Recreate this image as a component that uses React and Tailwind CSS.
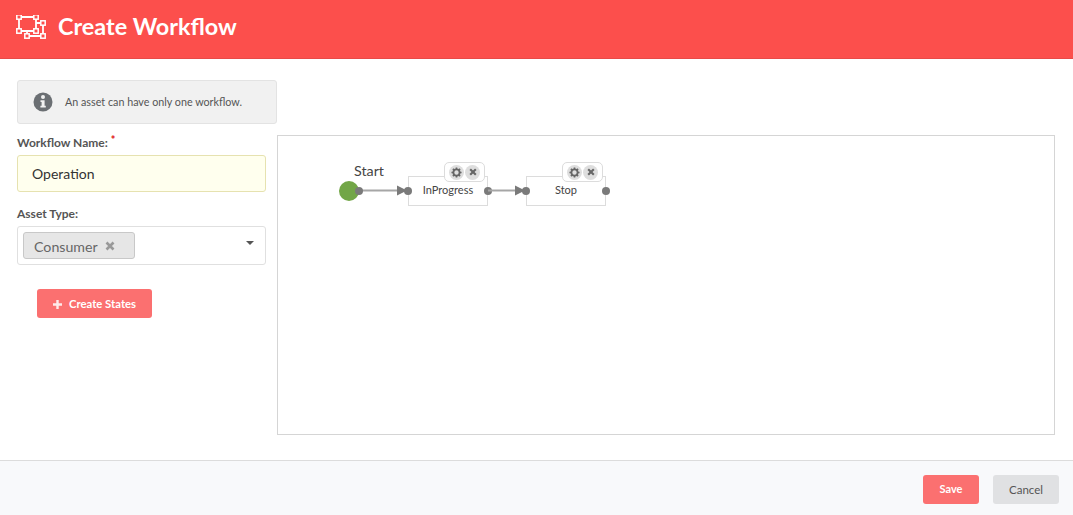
import React from "react";

const lato = { fontFamily: '"Lato", sans-serif' };

function HeaderIcon() {
  const handle = (x, y) => <rect key={x + "-" + y} x={x - 2.2} y={y - 2.2} width="4.4" height="4.4" fill="#fc4f4c" stroke="#fff" strokeWidth="1.5" />;
  return (
    <svg width="32" height="28" viewBox="0 0 32 28" fill="none" className="shrink-0">
      <path d="M3 2H20V16H3Z" stroke="#fff" strokeWidth="1.8" />
      <path d="M20 8H27V21H11V16" stroke="#fff" strokeWidth="1.8" />
      {[[3, 2], [20, 2], [3, 16], [20, 16], [27, 8], [11, 21], [27, 21]].map(([x, y]) => handle(x, y))}
    </svg>
  );
}

function InfoIcon() {
  return (
    <svg width="20" height="20" viewBox="0 0 20 20">
      <circle cx="10" cy="10" r="9.5" fill="#6b6f73" />
      <circle cx="10" cy="5" r="2" fill="#f1f1f1" />
      <path d="M7.5 8.2H11.6V13.8H12.8V15.6H7.4V13.8H8.6V10H7.5Z" fill="#f1f1f1" />
    </svg>
  );
}

function Gear() {
  return (
    <svg width="11" height="11" viewBox="0 0 12 12">
      <circle cx="6" cy="6" r="3.4" fill="none" stroke="#666" strokeWidth="2" />
      <path d="M6 .5V3M6 9V11.5M.5 6H3M9 6H11.5M2.1 2.1L3.8 3.8M8.2 8.2L9.9 9.9M9.9 2.1L8.2 3.8M3.8 8.2L2.1 9.9" stroke="#666" strokeWidth="1.8" />
    </svg>
  );
}

function Cross({ size = 8, color = "#666" }) {
  return (
    <svg width={size} height={size} viewBox="0 0 8 8">
      <path d="M1.2 1.2L6.8 6.8M6.8 1.2L1.2 6.8" stroke={color} strokeWidth="2.1" />
    </svg>
  );
}

function Port({ className }) {
  return <div className={"absolute w-2 h-2 rounded-full bg-[#7a7a7a] " + className} />;
}

function Arrow({ className, width }) {
  return (
    <svg className={"absolute " + className} width={width} height="12" viewBox={`0 0 ${width} 12`}>
      <path d={`M0 5.5H${width - 10}`} stroke="#a6a6a6" strokeWidth="2" />
      <path d={`M${width - 10} .5L${width} 5.5L${width - 10} 10.5Z`} fill="#7a7a7a" />
    </svg>
  );
}

function StateNode({ name, className }) {
  return (
    <div className={"absolute w-20 h-[30px] border border-[#dcdcdc] bg-white flex items-center justify-center pb-[2px] text-[11px] text-[#444] " + className}>
      {name}
      <div className="absolute -top-[15px] right-[2px] h-[20px] w-[41px] bg-white border border-[#dcdcdc] rounded-[5px] flex items-center justify-center gap-[1px]">
        <span className="w-[15px] h-[15px] rounded-full bg-[#dedede] flex items-center justify-center"><Gear /></span>
        <span className="w-[15px] h-[15px] rounded-full bg-[#dedede] flex items-center justify-center"><Cross /></span>
      </div>
      <Port className="-left-[5px] top-[10px]" />
      <Port className="-right-[5px] top-[10px]" />
    </div>
  );
}

export default function App() {
  return (
    <div className="w-[1073px] h-[515px] bg-white flex flex-col overflow-hidden" style={lato}>
      <header className="h-[59px] shrink-0 bg-[#fc4f4c] border-b border-[#e84a47] flex items-center pl-[16px] gap-[10px]">
        <HeaderIcon />
        <h1 className="text-[23.4px] font-bold text-white leading-none mb-[5px]">Create Workflow</h1>
      </header>

      <main className="flex-1 flex items-start pl-[17px]">
        <div className="w-[260px] shrink-0 pt-[21px]">
          <div className="h-[44px] bg-[#f1f1f1] border border-[#e3e3e3] rounded-[3px] flex items-center pl-[15px] gap-[12px]">
            <InfoIcon />
            <span className="text-[10.75px] text-[#555]">An asset can have only one workflow.</span>
          </div>
          <div className="w-[249px]">
            <label className="block mt-[11px] h-[20px] text-[12px] font-bold text-[#555] leading-[16px]">
              Workflow Name: <sup className="text-[#e02020] text-[11px] font-black leading-none -top-[3px]">*</sup>
            </label>
            <div className="h-[37px] bg-[#ffffee] border border-[#e6e2b0] rounded-[3px] flex items-center pl-[14px] text-[14px] text-[#333]">
              Operation
            </div>
            <label className="block mt-[14px] h-[20px] text-[12px] font-bold text-[#555] leading-[16px]">Asset Type:</label>
            <div className="h-[39px] bg-white border border-[#e0e0e0] rounded-[3px] flex items-center pl-[5px] pr-[11px] justify-between">
              <span className="h-[27px] w-[112px] bg-[#e6e6e6] border border-[#c8c8c8] rounded-[3px] flex items-center pl-[10px] gap-[7px] text-[14.2px] text-[#666]">
                <span className="pt-[2px]">Consumer</span> <Cross size={10} color="#999" />
              </span>
              <span className="w-0 h-0 border-x-[4px] border-x-transparent border-t-[4px] border-t-[#555] mb-[5px]" />
            </div>
            <button className="mt-[24px] ml-[20px] w-[115px] h-[29px] bg-[#fb7070] rounded-[3px] flex items-center justify-center gap-[7px] pt-[1px] text-[11.3px] font-bold text-white">
              <svg width="9" height="9" viewBox="0 0 9 9"><path d="M4.5 0V9M0 4.5H9" stroke="#fff" strokeWidth="2.4" opacity=".85" /></svg>
              Create States
            </button>
          </div>
        </div>

        <section className="relative mt-[76px] w-[778px] h-[300px] shrink-0 bg-white border border-[#d5d5d5]">
          <span className="absolute left-[76px] top-[26px] text-[14.3px] leading-[18px] text-[#444]">Start</span>
          <div className="absolute left-[61px] top-[45px] w-5 h-5 rounded-full bg-[#72a647]" />
          <Arrow className="left-[80px] top-[49px]" width={49} />
          <Port className="left-[77px] top-[51px]" />
          <StateNode name="InProgress" className="left-[130px] top-[40px]" />
          <Arrow className="left-[210px] top-[49px]" width={37} />
          <StateNode name="Stop" className="left-[248px] top-[40px]" />
        </section>
      </main>

      <footer className="h-[55px] shrink-0 bg-[#f8f9fb] border-t border-[#dcdcdc] flex items-start justify-end pt-[14px] pr-[14px] gap-[14px]">
        <button className="w-14 h-[29px] bg-[#fb7070] rounded-[3px] text-[11px] font-bold text-white">Save</button>
        <button className="w-[66px] h-[29px] bg-[#e0e1e3] rounded-[3px] text-[11.5px] text-[#555]">Cancel</button>
      </footer>
    </div>
  );
}
